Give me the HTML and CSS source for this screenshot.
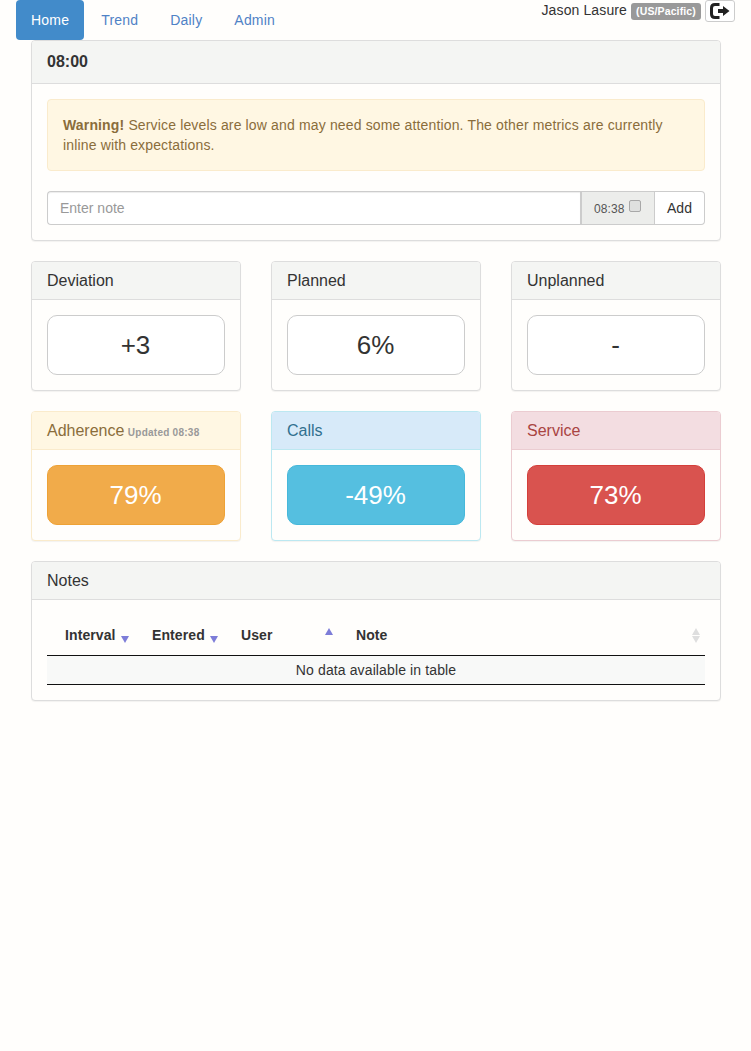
FILE: index.html
```html
<!DOCTYPE html>
<html lang="en">
<head>
  <meta charset="UTF-8">
  <title>Dashboard</title>
  <link rel="stylesheet" href="styles.css">
</head>
<body>
  <header class="topbar">
    <ul class="nav">
      <li class="active"><a href="#">Home</a></li>
      <li><a href="#">Trend</a></li>
      <li><a href="#">Daily</a></li>
      <li><a href="#">Admin</a></li>
    </ul>
    <div class="user">
      <span>Jason Lasure</span>
      <span class="label">(US/Pacific)</span>
      <button class="logout" type="button" aria-label="Sign out">
        <svg width="20" height="16" viewBox="0 0 20 16">
          <path d="M9.500 1.500H5Q1.500 1.500 1.500 5V11Q1.500 14.500 5 14.500H9.500" fill="none" stroke="#222" stroke-width="3"/>
          <path d="M8 6H13V3L19.500 8L13 13V10H8Z" fill="#222"/>
        </svg>
      </button>
    </div>
  </header>

  <main class="container">
    <section class="panel">
      <div class="panel-heading strong">08:00</div>
      <div class="panel-body">
        <div class="alert"><strong>Warning!</strong> Service levels are low and may need some attention. The other metrics are currently inline with expectations.</div>
        <div class="input-group">
          <input type="text" placeholder="Enter note">
          <span class="addon">08:38 <input type="checkbox"></span>
          <button type="button">Add</button>
        </div>
      </div>
    </section>

    <div class="row">
      <section class="panel">
        <div class="panel-heading">Deviation</div>
        <div class="panel-body"><div class="metric">+3</div></div>
      </section>
      <section class="panel">
        <div class="panel-heading">Planned</div>
        <div class="panel-body"><div class="metric">6%</div></div>
      </section>
      <section class="panel">
        <div class="panel-heading">Unplanned</div>
        <div class="panel-body"><div class="metric">-</div></div>
      </section>
    </div>

    <div class="row">
      <section class="panel panel-warning">
        <div class="panel-heading">Adherence <small>Updated 08:38</small></div>
        <div class="panel-body"><div class="metric metric-warning">79%</div></div>
      </section>
      <section class="panel panel-info">
        <div class="panel-heading">Calls</div>
        <div class="panel-body"><div class="metric metric-info">-49%</div></div>
      </section>
      <section class="panel panel-danger">
        <div class="panel-heading">Service</div>
        <div class="panel-body"><div class="metric metric-danger">73%</div></div>
      </section>
    </div>

    <section class="panel">
      <div class="panel-heading">Notes</div>
      <div class="panel-body">
        <table class="notes">
          <thead>
            <tr>
              <th class="col-interval sort-desc">Interval</th>
              <th class="col-entered sort-desc">Entered</th>
              <th class="col-user sort-asc">User</th>
              <th class="sort-both">Note</th>
            </tr>
          </thead>
          <tbody>
            <tr><td colspan="4">No data available in table</td></tr>
          </tbody>
        </table>
      </div>
    </section>
  </main>
</body>
</html>
```

FILE: styles.css
```css
* {
  box-sizing: border-box;
}
body {
  margin: 0;
  background: #fffefc;
  color: #333;
  font-family: "Liberation Sans", Arial, sans-serif;
  font-size: 14px;
  line-height: 20px;
  letter-spacing: .12px;
}
.topbar {
  display: flex;
  justify-content: space-between;
  align-items: flex-start;
  padding: 0 16px;
  height: 40px;
}
.nav {
  display: flex;
  gap: 2px;
  list-style: none;
  margin: 0;
  padding: 0;
  letter-spacing: .2px;
}
.nav a {
  display: block;
  padding: 10px 15px;
  border-radius: 0 0 4px 4px;
  color: #4f82c6;
  text-decoration: none;
}
.nav .active a {
  background: #428bca;
  color: #fff;
  border-radius: 4px;
}
.user {
  display: flex;
  align-items: flex-start;
  color: #333;
}
.label {
  margin: 3px 4px 0;
  padding: 0 5px;
  width: 70px;
  height: 17px;
  background: #999;
  color: #fff;
  border-radius: 3px;
  font-size: 10.500px;
  font-weight: bold;
  line-height: 17px;
  text-align: center;
  white-space: nowrap;
}
.logout {
  width: 30px;
  height: 22px;
  padding: 0;
  background: #fff;
  border: 1px solid #ccc;
  border-radius: 3px;
  display: flex;
  align-items: center;
  justify-content: center;
}
.container {
  padding: 0 30px 0 31px;
}
.panel {
  background: #fffefc;
  border: 1px solid #ddd;
  border-radius: 4px;
  margin-bottom: 20px;
  box-shadow: 0 1px 1px rgba(0, 0, 0, .05);
}
.panel-heading {
  padding: 9px 15px 7px;
  background: #f4f5f3;
  border-bottom: 1px solid #ddd;
  border-radius: 3px 3px 0 0;
  font-size: 16px;
  height: 38px;
  line-height: 20px;
  letter-spacing: 0;
}
.panel-heading.strong {
  height: 43px;
  padding: 11px 15px 9px;
  font-weight: bold;
}
.panel-heading small {
  margin-left: -1px;
  color: #999;
  font-size: 10px;
  font-weight: bold;
  letter-spacing: .25px;
}
.panel-body {
  padding: 15px;
}
.alert {
  padding: 15px;
  margin-bottom: 20px;
  background: #fff7e3;
  border: 1px solid #faebcc;
  border-radius: 4px;
  color: #8a6d3b;
  letter-spacing: .15px;
}
.input-group {
  display: flex;
  height: 34px;
}
.input-group input[type="text"] {
  flex: 1;
  min-width: 0;
  padding: 6px 12px;
  border: 1px solid #ccc;
  border-right: 0;
  border-radius: 4px 0 0 4px;
  box-shadow: inset 0 1px 1px rgba(0, 0, 0, .075);
  color: #555;
  font: inherit;
}
.input-group input::placeholder {
  color: #999;
}
.addon {
  width: 75px;
  padding: 7px 0 0 12px;
  background: #ecedeb;
  border: 1px solid #ccc;
  border-left-width: 2px;
  color: #555;
  font-size: 12px;
  white-space: nowrap;
}
.addon input {
  appearance: none;
  margin: 0 0 0 1px;
  vertical-align: 1px;
  width: 12px;
  height: 12px;
  background: #dfe0df;
  border: 1px solid #a8a8a8;
  border-radius: 2px;
}
.input-group button {
  width: 50px;
  background: #fff;
  border: 1px solid #ccc;
  border-left: 0;
  border-radius: 0 4px 4px 0;
  color: #333;
  font: inherit;
  padding: 0;
}
.row {
  display: grid;
  grid-template-columns: repeat(3, 210px);
  gap: 30px;
}
.metric {
  height: 60px;
  padding-right: 1px;
  background: #fff;
  border: 1px solid #ccc;
  border-radius: 10px;
  color: #333;
  font-size: 26px;
  line-height: 58px;
  letter-spacing: 0;
  text-align: center;
}
.metric-warning {
  background: #f1ab4a;
  border-color: #eea236;
  color: #fff;
}
.metric-info {
  background: #55bfe0;
  border-color: #46b8da;
  color: #fff;
}
.metric-danger {
  background: #d9534f;
  border-color: #d43f3a;
  color: #fff;
}
.panel-warning {
  border-color: #faebcc;
}
.panel-warning .panel-heading {
  background: #fff7e3;
  border-color: #faebcc;
  color: #8a6d3b;
}
.panel-info {
  border-color: #bce8f1;
}
.panel-info .panel-heading {
  background: #d7eaf9;
  border-color: #bce8f1;
  color: #31708f;
}
.panel-danger {
  border-color: #ebccd1;
}
.panel-danger .panel-heading {
  background: #f3dde1;
  border-color: #ebccd1;
  color: #a94442;
}
.notes {
  width: 100%;
  table-layout: fixed;
  border-collapse: collapse;
}
.notes th {
  position: relative;
  padding: 10px 18px;
  height: 40px;
  border-bottom: 1px solid #111;
  text-align: left;
  vertical-align: bottom;
  letter-spacing: .1px;
}
.notes td {
  height: 29px;
  padding: 4px 10px;
  background: #f8f9f8;
  border-bottom: 1px solid #111;
  text-align: center;
}
.col-interval {
  width: 87px;
}
.col-entered {
  width: 89px;
}
.col-user {
  width: 115px;
}
.notes th::before,
.notes th::after {
  position: absolute;
  right: 5px;
  width: 0;
  height: 0;
  border-left: 4.500px solid transparent;
  border-right: 4.500px solid transparent;
}
.sort-desc::after {
  content: "";
  bottom: 12px;
  border-top: 7px solid #7d7dd8;
}
.sort-asc::before {
  content: "";
  bottom: 20px;
  border-bottom: 7px solid #7d7dd8;
}
.sort-both::before {
  content: "";
  bottom: 20px;
  border-bottom: 7px solid #dedede;
}
.sort-both::after {
  content: "";
  bottom: 12px;
  border-top: 7px solid #dedede;
}
```
